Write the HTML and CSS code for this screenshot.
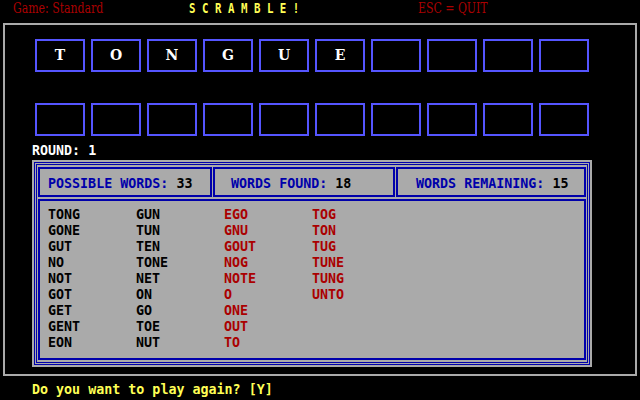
FILE: index.html
```html
<!DOCTYPE html>
<html>
<head>
<meta charset="utf-8">
<link rel="stylesheet" href="styles.css">
</head>
<body>
<div class="screen">
  <header class="topbar">
    <span class="mode"><span class="squeeze">Game: Standard</span></span>
    <span class="title"><span class="squeeze">S C R A M B L E !</span></span>
    <span class="quit"><span class="squeeze">ESC = QUIT</span></span>
  </header>
  <main class="frame">
    <div class="tiles">
      <div class="tile">T</div><div class="tile">O</div><div class="tile">N</div><div class="tile">G</div><div class="tile">U</div><div class="tile">E</div><div class="tile"></div><div class="tile"></div><div class="tile"></div><div class="tile"></div>
    </div>
    <div class="tiles tiles-answer">
      <div class="tile"></div><div class="tile"></div><div class="tile"></div><div class="tile"></div><div class="tile"></div><div class="tile"></div><div class="tile"></div><div class="tile"></div><div class="tile"></div><div class="tile"></div>
    </div>
    <div class="round">ROUND: 1</div>
    <section class="panel">
      <div class="panel-inner">
        <div class="stats">
          <div class="stat stat-possible"><span class="label">POSSIBLE WORDS:</span> 33</div>
          <div class="stat stat-found"><span class="label">WORDS FOUND:</span> 18</div>
          <div class="stat stat-remaining"><span class="label">WORDS REMAINING:</span> 15</div>
        </div>
        <div class="words">
          <span>TONG</span><span>GONE</span><span>GUT</span><span>NO</span><span>NOT</span><span>GOT</span><span>GET</span><span>GENT</span><span>EON</span>
          <span>GUN</span><span>TUN</span><span>TEN</span><span>TONE</span><span>NET</span><span>ON</span><span>GO</span><span>TOE</span><span>NUT</span>
          <span class="missed">EGO</span><span class="missed">GNU</span><span class="missed">GOUT</span><span class="missed">NOG</span><span class="missed">NOTE</span><span class="missed">O</span><span class="missed">ONE</span><span class="missed">OUT</span><span class="missed">TO</span>
          <span class="missed">TOG</span><span class="missed">TON</span><span class="missed">TUG</span><span class="missed">TUNE</span><span class="missed">TUNG</span><span class="missed">UNTO</span>
        </div>
      </div>
    </section>
  </main>
  <p class="prompt">Do you want to play again? [Y]</p>
</div>
</body>
</html>
```
FILE: styles.css
```css
html, body {
  margin: 0;
  padding: 0;
  background: #000;
}
.screen {
  width: 640px;
  height: 400px;
  overflow: hidden;
  background: #000;
}
.topbar {
  display: flex;
  height: 23px;
  box-sizing: border-box;
  padding: 1px 0 0 13px;
  font-family: "DejaVu Serif", serif;
  font-size: 14px;
  line-height: 15px;
  white-space: pre;
}
.topbar > span {
  flex: none;
}
.squeeze {
  display: inline-block;
  transform: scaleX(0.78);
  transform-origin: left top;
}
.mode {
  width: 176px;
  color: #aa0000;
}
.title {
  width: 229px;
  color: #ffff55;
  font-family: "DejaVu Sans Mono", monospace;
  font-weight: bold;
  font-size: 14px;
}
.title .squeeze {
  transform: scaleX(0.77);
}
.quit {
  color: #aa0000;
}
.frame {
  display: block;
  margin-left: 3px;
  width: 634px;
  height: 353px;
  box-sizing: border-box;
  border: 2px solid #aaaaaa;
  padding: 14px 0 0 27px;
}
.tiles {
  display: flex;
  gap: 6px;
  margin-left: 3px;
}
.tile {
  width: 50px;
  height: 33px;
  box-sizing: border-box;
  border: 2px solid #5555ff;
  display: flex;
  align-items: center;
  justify-content: center;
  color: #fff;
  font-family: "DejaVu Serif", serif;
  font-weight: bold;
  font-size: 14px;
  padding-bottom: 1px;
}
.tiles-answer {
  margin-top: 31px;
}
.round {
  margin-top: 7px;
  color: #fff;
  font-family: "DejaVu Sans Mono", monospace;
  font-weight: bold;
  font-size: 13.33px;
  line-height: 16px;
}
.panel {
  margin-top: 1px;
  width: 560px;
  height: 207px;
  box-sizing: border-box;
  background: #aaaaaa;
  padding: 2px;
}
.panel-inner {
  height: 100%;
  box-sizing: border-box;
  border: 3px double #0000aa;
  padding: 2px 1px;
  display: flex;
  flex-direction: column;
  gap: 2px;
  font-family: "DejaVu Sans Mono", monospace;
  font-weight: bold;
  font-size: 13.33px;
  line-height: 16px;
  color: #000;
}
.stats {
  display: flex;
  gap: 1px;
  height: 30px;
  flex: none;
}
.stat {
  box-sizing: border-box;
  border: 2px solid #0000aa;
  padding-top: 7px;
  white-space: pre;
}
.stat .label {
  color: #0000aa;
}
.stat-possible {
  width: 174px;
  padding-left: 8px;
}
.stat-found {
  width: 182px;
  padding-left: 16px;
}
.stat-remaining {
  width: 190px;
  padding-left: 18px;
}
.words {
  flex: 1;
  box-sizing: border-box;
  border: 2px solid #0000aa;
  padding: 6px 8px;
  display: grid;
  grid-template-rows: repeat(9, 16px);
  grid-auto-flow: column;
  grid-auto-columns: 88px;
}
.words .missed {
  color: #aa0000;
}
.prompt {
  margin: 6px 0 0 32px;
  color: #ffff55;
  font-family: "DejaVu Sans Mono", monospace;
  font-weight: bold;
  font-size: 13.33px;
  line-height: 16px;
}
```
